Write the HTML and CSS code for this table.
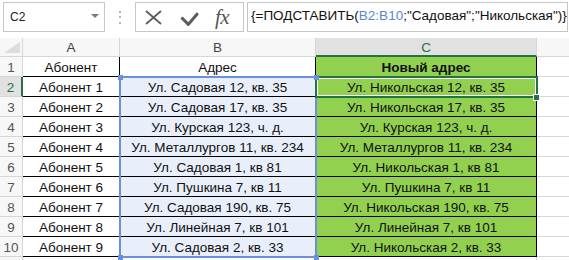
FILE: index.html
```html
<!DOCTYPE html>
<html lang="ru">
<head>
<meta charset="utf-8">
<title>ПОДСТАВИТЬ</title>
<link rel="stylesheet" href="styles.css">
</head>
<body>
<div class="app">
  <div class="toolbar">
    <div class="namebox">
      <span>C2</span>
      <svg class="drop" width="8" height="4" viewBox="0 0 8 4"><path d="M0 0H8L4 4Z" fill="#7a7a7a"/></svg>
    </div>
    <div class="grip"><i></i><i></i><i></i></div>
    <div class="fxbox">
      <svg class="ico-x" width="17" height="15" viewBox="0 0 17 15"><path d="M1 1L16 14M16 1L1 14" stroke="#5c5c5c" stroke-width="1.8" fill="none"/></svg>
      <svg class="ico-ok" width="19" height="14" viewBox="0 0 19 14"><path d="M1.5 5.5L8.3 12.4L17.8 1.2" stroke="#5c5c5c" stroke-width="3" fill="none"/></svg>
      <span class="fx">fx</span>
    </div>
    <div class="formula">{=ПОДСТАВИТЬ(<span class="ref">B2:B10</span>;"Садовая";"Никольская")}</div>
  </div>

  <div class="sheet">
    <div class="h corner"><svg width="16" height="11" viewBox="0 0 16 11"><path d="M16 0V11H0Z" fill="#dcdcdc"/></svg></div>
    <div class="h">A</div>
    <div class="h">B</div>
    <div class="h act-col">C</div>
    <div class="h dcol"></div>

    <div class="rh">1</div>
    <div class="c">Абонент</div>
    <div class="c">Адрес</div>
    <div class="c g b">Новый адрес</div>
    <div class="d"></div>

    <div class="rh act-row">2</div>
    <div class="c">Абонент 1</div>
    <div class="c bl">Ул. Садовая 12, кв. 35</div>
    <div class="c g">Ул. Никольская 12, кв. 35</div>
    <div class="d"></div>

    <div class="rh">3</div>
    <div class="c">Абонент 2</div>
    <div class="c bl">Ул. Садовая 17, кв. 35</div>
    <div class="c g">Ул. Никольская 17, кв. 35</div>
    <div class="d"></div>

    <div class="rh">4</div>
    <div class="c">Абонент 3</div>
    <div class="c bl">Ул. Курская 123, ч. д.</div>
    <div class="c g">Ул. Курская 123, ч. д.</div>
    <div class="d"></div>

    <div class="rh">5</div>
    <div class="c">Абонент 4</div>
    <div class="c bl">Ул. Металлургов 11, кв. 234</div>
    <div class="c g">Ул. Металлургов 11, кв. 234</div>
    <div class="d"></div>

    <div class="rh">6</div>
    <div class="c">Абонент 5</div>
    <div class="c bl">Ул. Садовая 1, кв 81</div>
    <div class="c g">Ул. Никольская 1, кв 81</div>
    <div class="d"></div>

    <div class="rh">7</div>
    <div class="c">Абонент 6</div>
    <div class="c bl">Ул. Пушкина 7, кв 11</div>
    <div class="c g">Ул. Пушкина 7, кв 11</div>
    <div class="d"></div>

    <div class="rh">8</div>
    <div class="c">Абонент 7</div>
    <div class="c bl">Ул. Садовая 190, кв. 75</div>
    <div class="c g">Ул. Никольская 190, кв. 75</div>
    <div class="d"></div>

    <div class="rh">9</div>
    <div class="c">Абонент 8</div>
    <div class="c bl">Ул. Линейная 7, кв 101</div>
    <div class="c g">Ул. Линейная 7, кв 101</div>
    <div class="d"></div>

    <div class="rh">10</div>
    <div class="c">Абонент 9</div>
    <div class="c bl">Ул. Садовая 2, кв. 33</div>
    <div class="c g">Ул. Никольская 2, кв. 33</div>
    <div class="d"></div>

    <div class="rh"></div>
    <div class="e"></div>
    <div class="e"></div>
    <div class="e"></div>
    <div class="d"></div>

    <div class="range"></div>
    <div class="sel"><span class="fill"></span></div>
    <span class="hnd h-tl"></span>
    <span class="hnd h-tr"></span>
    <span class="hnd h-bl"></span>
    <span class="hnd h-br"></span>
  </div>
</div>
</body>
</html>
```

FILE: styles.css
```css
html, body {
  margin: 0;
  padding: 0;
  background: #fff;
  overflow: hidden;
}
body {
  font-family: "Liberation Sans", Arial, sans-serif;
  color: #000;
}
.app {
  width: 569px;
  height: 260px;
  overflow: hidden;
}

/* ---------- toolbar ---------- */
.toolbar {
  height: 38px;
  box-sizing: border-box;
  padding: 2px 1px 0 3px;
  display: flex;
  align-items: flex-start;
}
.namebox {
  width: 102px;
  height: 30px;
  box-sizing: border-box;
  border: 1px solid #c6c6c6;
  display: flex;
  align-items: center;
  justify-content: space-between;
  padding: 0 5px 0 6px;
  font-size: 12px;
  color: #222;
}
.drop { display: block; margin-top: -2px; }
.grip {
  width: 30px;
  height: 30px;
  display: flex;
  flex-direction: column;
  align-items: center;
  justify-content: center;
  gap: 3.5px;
}
.grip i {
  display: block;
  width: 2px;
  height: 2px;
  background: #b8b8b8;
}
.fxbox {
  width: 109px;
  height: 30px;
  box-sizing: border-box;
  border: 1px solid #c6c6c6;
  display: flex;
  align-items: center;
}
.ico-x { display: block; margin-left: 9px; margin-top: 1px; }
.ico-ok { display: block; margin-left: 18px; margin-top: 3px; }
.fx {
  margin-left: 16px;
  font-family: "Liberation Serif", "DejaVu Serif", serif;
  font-style: italic;
  font-size: 21px;
  line-height: 28px;
  color: #555;
  letter-spacing: -0.5px;
}
.formula {
  flex: 1;
  margin-left: 3px;
  height: 30px;
  box-sizing: border-box;
  border: 1px solid #c6c6c6;
  padding-left: 3px;
  font-size: 13.5px;
  line-height: 26px;
  white-space: nowrap;
  overflow: hidden;
  color: #111;
}
.ref { color: #5a86d6; }

/* ---------- sheet ---------- */
.sheet {
  position: relative;
  display: grid;
  grid-template-columns: 23px 97px 196px 221px 32px;
  grid-template-rows: 19px repeat(11, 20px);
  font-size: 13.5px;
}
.h, .rh, .c, .d, .e {
  box-sizing: border-box;
  white-space: nowrap;
  overflow: hidden;
  text-align: center;
  line-height: 16px;
}
.h {
  background: #f7f7f7;
  border-right: 1px solid #d6d6d6;
  border-bottom: 1px solid #d6d6d6;
  color: #444;
  padding-top: 2px;
}
.corner {
  display: flex;
  align-items: flex-end;
  justify-content: flex-end;
  padding: 0 2px 3px 0;
}
.corner svg { display: block; }
.act-col {
  background: #e1e1e1;
  color: #217346;
  border-bottom: 2px solid #217346;
}
.dcol { border-right: none; }
.rh {
  background: #f7f7f7;
  border-right: 1px solid #d6d6d6;
  border-bottom: 1px solid #d6d6d6;
  color: #555;
  padding-top: 3px;
}
.act-row {
  background: #e1e1e1;
  color: #217346;
  border-right: 2px solid #217346;
}
.c {
  border-right: 1px solid #000;
  border-bottom: 1px solid #000;
  padding-top: 3px;
  color: #111;
}
.g { background: #92d050; }
.b { font-weight: bold; }
.bl { background: #e9effa; }
.d {
  border-bottom: 1px solid #d6d6d6;
}
.e {
  border-right: 1px solid #d6d6d6;
  border-bottom: 1px solid #d6d6d6;
}

/* ---------- overlays ---------- */
.range {
  position: absolute;
  left: 119px;
  top: 38px;
  width: 198px;
  height: 182px;
  box-sizing: border-box;
  border: 2px solid #6a8fdc;
  z-index: 1;
}
.sel {
  position: absolute;
  left: 315px;
  top: 38px;
  width: 223px;
  height: 22px;
  box-sizing: border-box;
  border: 2px solid #217346;
  box-shadow: inset 0 0 0 1px #fff;
  z-index: 2;
}
.sel .fill {
  position: absolute;
  right: -4px;
  bottom: -5px;
  width: 5px;
  height: 5px;
  background: #217346;
  border: 1px solid #fff;
}
.hnd {
  position: absolute;
  width: 5px;
  height: 5px;
  background: #6a8fdc;
  z-index: 3;
}
.h-tl { left: 118px; top: 37px; }
.h-tr { left: 314px; top: 37px; }
.h-bl { left: 118px; top: 217px; }
.h-br { left: 314px; top: 217px; }
```
